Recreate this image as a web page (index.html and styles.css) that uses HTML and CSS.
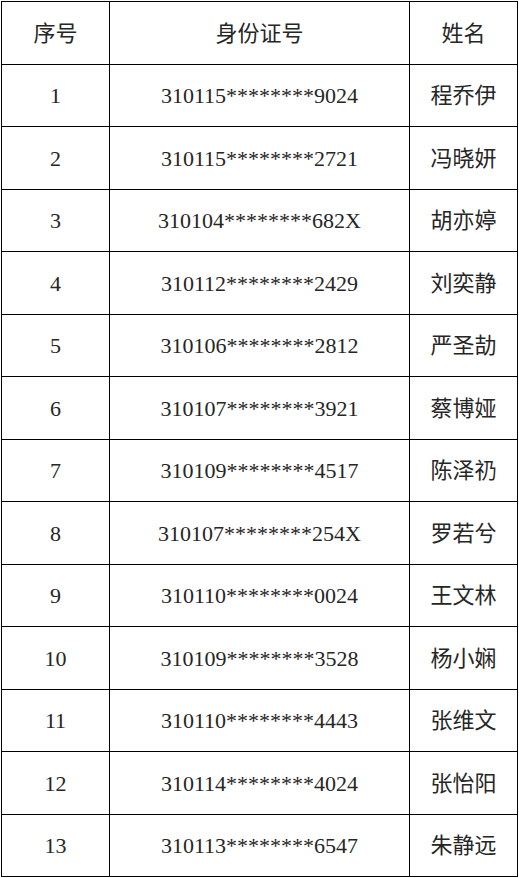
FILE: index.html
```html
<!DOCTYPE html>
<html lang="zh">
<head>
<meta charset="utf-8">
<title>名单</title>
<link rel="stylesheet" href="styles.css">
</head>
<body>
<table class="roster">
  <colgroup><col class="c-no"><col class="c-id"><col class="c-name"></colgroup>
  <thead>
    <tr><th>序号</th><th>身份证号</th><th>姓名</th></tr>
  </thead>
  <tbody>
    <tr><td>1</td><td>310115********9024</td><td>程乔伊</td></tr>
    <tr><td>2</td><td>310115********2721</td><td>冯晓妍</td></tr>
    <tr><td>3</td><td>310104********682X</td><td>胡亦婷</td></tr>
    <tr><td>4</td><td>310112********2429</td><td>刘奕静</td></tr>
    <tr><td>5</td><td>310106********2812</td><td>严圣劼</td></tr>
    <tr><td>6</td><td>310107********3921</td><td>蔡博娅</td></tr>
    <tr><td>7</td><td>310109********4517</td><td>陈泽礽</td></tr>
    <tr><td>8</td><td>310107********254X</td><td>罗若兮</td></tr>
    <tr><td>9</td><td>310110********0024</td><td>王文林</td></tr>
    <tr><td>10</td><td>310109********3528</td><td>杨小娴</td></tr>
    <tr><td>11</td><td>310110********4443</td><td>张维文</td></tr>
    <tr><td>12</td><td>310114********4024</td><td>张怡阳</td></tr>
    <tr><td>13</td><td>310113********6547</td><td>朱静远</td></tr>
  </tbody>
</table>
</body>
</html>
```
FILE: styles.css
```css
html, body {
  margin: 0;
  padding: 0;
  background: #fff;
}
body {
  padding: 1px 0 0 1px;
}
.roster {
  border-collapse: collapse;
  table-layout: fixed;
  width: 517px;
  font-family: "Liberation Serif", "Noto Sans CJK SC", serif;
  font-size: 22px;
  color: #262626;
}
.c-no { width: 108px; }
.c-id { width: 300px; }
.c-name { width: 108px; }
.roster tr {
  height: 62.5px;
}
.roster th,
.roster td {
  border: 1px solid #000;
  padding: 2px 0 0;
  text-align: center;
  vertical-align: middle;
  font-weight: normal;
  line-height: 1;
}
```
